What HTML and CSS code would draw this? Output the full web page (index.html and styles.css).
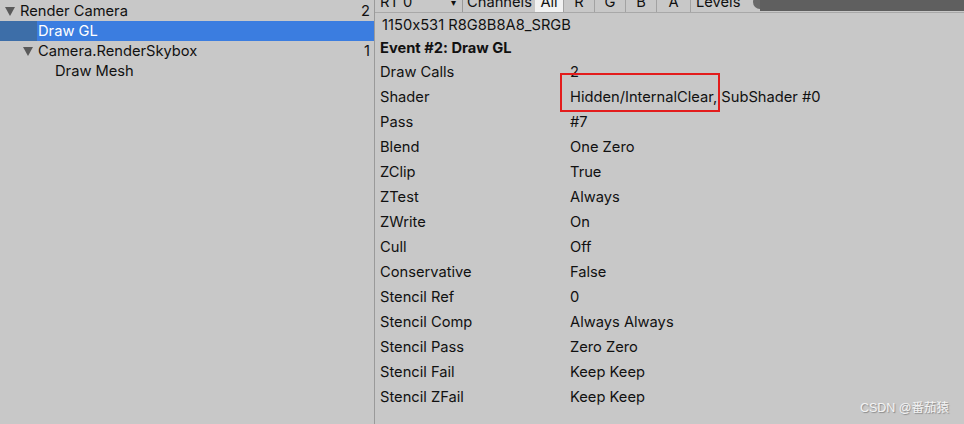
FILE: index.html
```html
<!DOCTYPE html>
<html lang="en">
<head>
    <meta charset="UTF-8">
    <title>Frame Debugger</title>
    <link rel="stylesheet" href="styles.css">
</head>
<body>

<div class="tree">
    <div class="tree-row level-0"><span class="fold"></span><span class="name">Render Camera</span><span class="count">2</span></div>
    <div class="tree-row level-1 selected"><span class="name">Draw GL</span></div>
    <div class="tree-row level-1"><span class="fold"></span><span class="name">Camera.RenderSkybox</span><span class="count">1</span></div>
    <div class="tree-row level-2"><span class="name">Draw Mesh</span></div>
</div>

<div class="details">
    <div class="toolbar">
        <div class="tb-item rt">RT 0 <span class="caret">&#9662;</span></div>
        <div class="tb-item channels">Channels</div>
        <div class="tb-btn all">All</div>
        <div class="tb-btn">R</div>
        <div class="tb-btn">G</div>
        <div class="tb-btn">B</div>
        <div class="tb-btn last">A</div>
        <div class="tb-item levels">Levels</div>
        <div class="slider"><span class="knob"></span><span class="track"></span></div>
    </div>

    <div class="info">
        <div class="format">1150x531 R8G8B8A8_SRGB</div>
        <div class="event">Event #2: Draw GL</div>
        <div class="props">
            <div class="prop"><span>Draw Calls</span><span>2</span></div>
            <div class="prop"><span>Shader</span><span><span class="marked">Hidden/InternalClear,</span> SubShader #0</span></div>
            <div class="prop"><span>Pass</span><span>#7</span></div>
            <div class="prop"><span>Blend</span><span>One Zero</span></div>
            <div class="prop"><span>ZClip</span><span>True</span></div>
            <div class="prop"><span>ZTest</span><span>Always</span></div>
            <div class="prop"><span>ZWrite</span><span>On</span></div>
            <div class="prop"><span>Cull</span><span>Off</span></div>
            <div class="prop"><span>Conservative</span><span>False</span></div>
            <div class="prop"><span>Stencil Ref</span><span>0</span></div>
            <div class="prop"><span>Stencil Comp</span><span>Always Always</span></div>
            <div class="prop"><span>Stencil Pass</span><span>Zero Zero</span></div>
            <div class="prop"><span>Stencil Fail</span><span>Keep Keep</span></div>
            <div class="prop"><span>Stencil ZFail</span><span>Keep Keep</span></div>
        </div>
    </div>
</div>

<div class="watermark">CSDN @番茄猿</div>

</body>
</html>
```

FILE: styles.css
```css
body {
    margin: 0;
    width: 964px;
    height: 424px;
    overflow: hidden;
    display: flex;
    background-color: #c8c8c8;
    color: #111;
    font-family: Inter, "Noto Sans", sans-serif;
    font-size: 14.7px;
    font-feature-settings: "calt" 0;
    position: relative;
}
.tree {
    width: 374px;
    border-right: 1px solid #9a9a9a;
    padding-top: 1px;
}
.tree-row {
    height: 20px;
    display: flex;
    align-items: center;
    padding-right: 4px;
}
.tree-row .name {
    flex: 1;
}
.tree-row .count {
    text-align: right;
}
.level-0 {
    padding-left: 5px;
}
.level-1 {
    padding-left: 23px;
}
.level-2 {
    padding-left: 55px;
}
.selected {
    padding-left: 38px;
    color: #fff;
    background: linear-gradient(to right, #3d6ea8 0, #3d6ea8 37px, #3b7de0 37px);
}
.fold {
    width: 0;
    height: 0;
    border-left: 5px solid transparent;
    border-right: 5px solid transparent;
    border-top: 9px solid #5a5a5a;
    margin-right: 5px;
}
.details {
    flex: 1;
    min-width: 0;
}
.toolbar {
    height: 21px;
    margin-top: -9px;
    display: flex;
    align-items: center;
    border-bottom: 1px solid #a8a8a8;
    white-space: nowrap;
}
.tb-item {
    height: 100%;
    display: flex;
    align-items: center;
}
.rt {
    width: 82px;
    padding-left: 5px;
    border-right: 1px solid #999;
}
.caret {
    margin-left: auto;
    margin-right: 6px;
    font-size: 10px;
}
.channels {
    padding-left: 4px;
    width: 68px;
}
.tb-btn {
    height: 100%;
    width: 30px;
    display: flex;
    align-items: center;
    justify-content: center;
    border-left: 1px solid #a2a2a2;
}
.tb-btn.all {
    width: 28px;
    border-left: none;
    background-color: #f2f2f2;
}
.tb-btn.last {
    width: 33px;
    border-right: 1px solid #a2a2a2;
}
.levels {
    padding-left: 5px;
    width: 57px;
}
.slider {
    flex: 1;
    height: 100%;
    display: flex;
    align-items: center;
}
.knob {
    width: 14px;
    height: 14px;
    border-radius: 50%;
    background-color: #6a6a6a;
}
.track {
    flex: 1;
    height: 18px;
    margin-left: -7px;
    background-color: #5f5f5f;
}
.info {
    padding: 1px 0 0 5px;
}
.format {
    height: 22px;
    line-height: 22px;
    padding-left: 2px;
}
.event {
    height: 24px;
    line-height: 24px;
    font-weight: bold;
}
.prop {
    height: 25px;
    line-height: 25px;
    display: grid;
    grid-template-columns: 190px 1fr;
}
.marked {
    position: relative;
}
.marked::after {
    content: "";
    position: absolute;
    left: -10px;
    right: -3px;
    top: -15px;
    bottom: -6px;
    border: 2px solid #e31c1c;
}
.watermark {
    position: absolute;
    right: 15px;
    bottom: 8px;
    font-size: 12.5px;
    color: #f4f4f4;
    text-shadow: 1px 1px 1px #8a8a8a;
    font-family: "Liberation Sans", "Noto Sans CJK SC", sans-serif;
}
```
